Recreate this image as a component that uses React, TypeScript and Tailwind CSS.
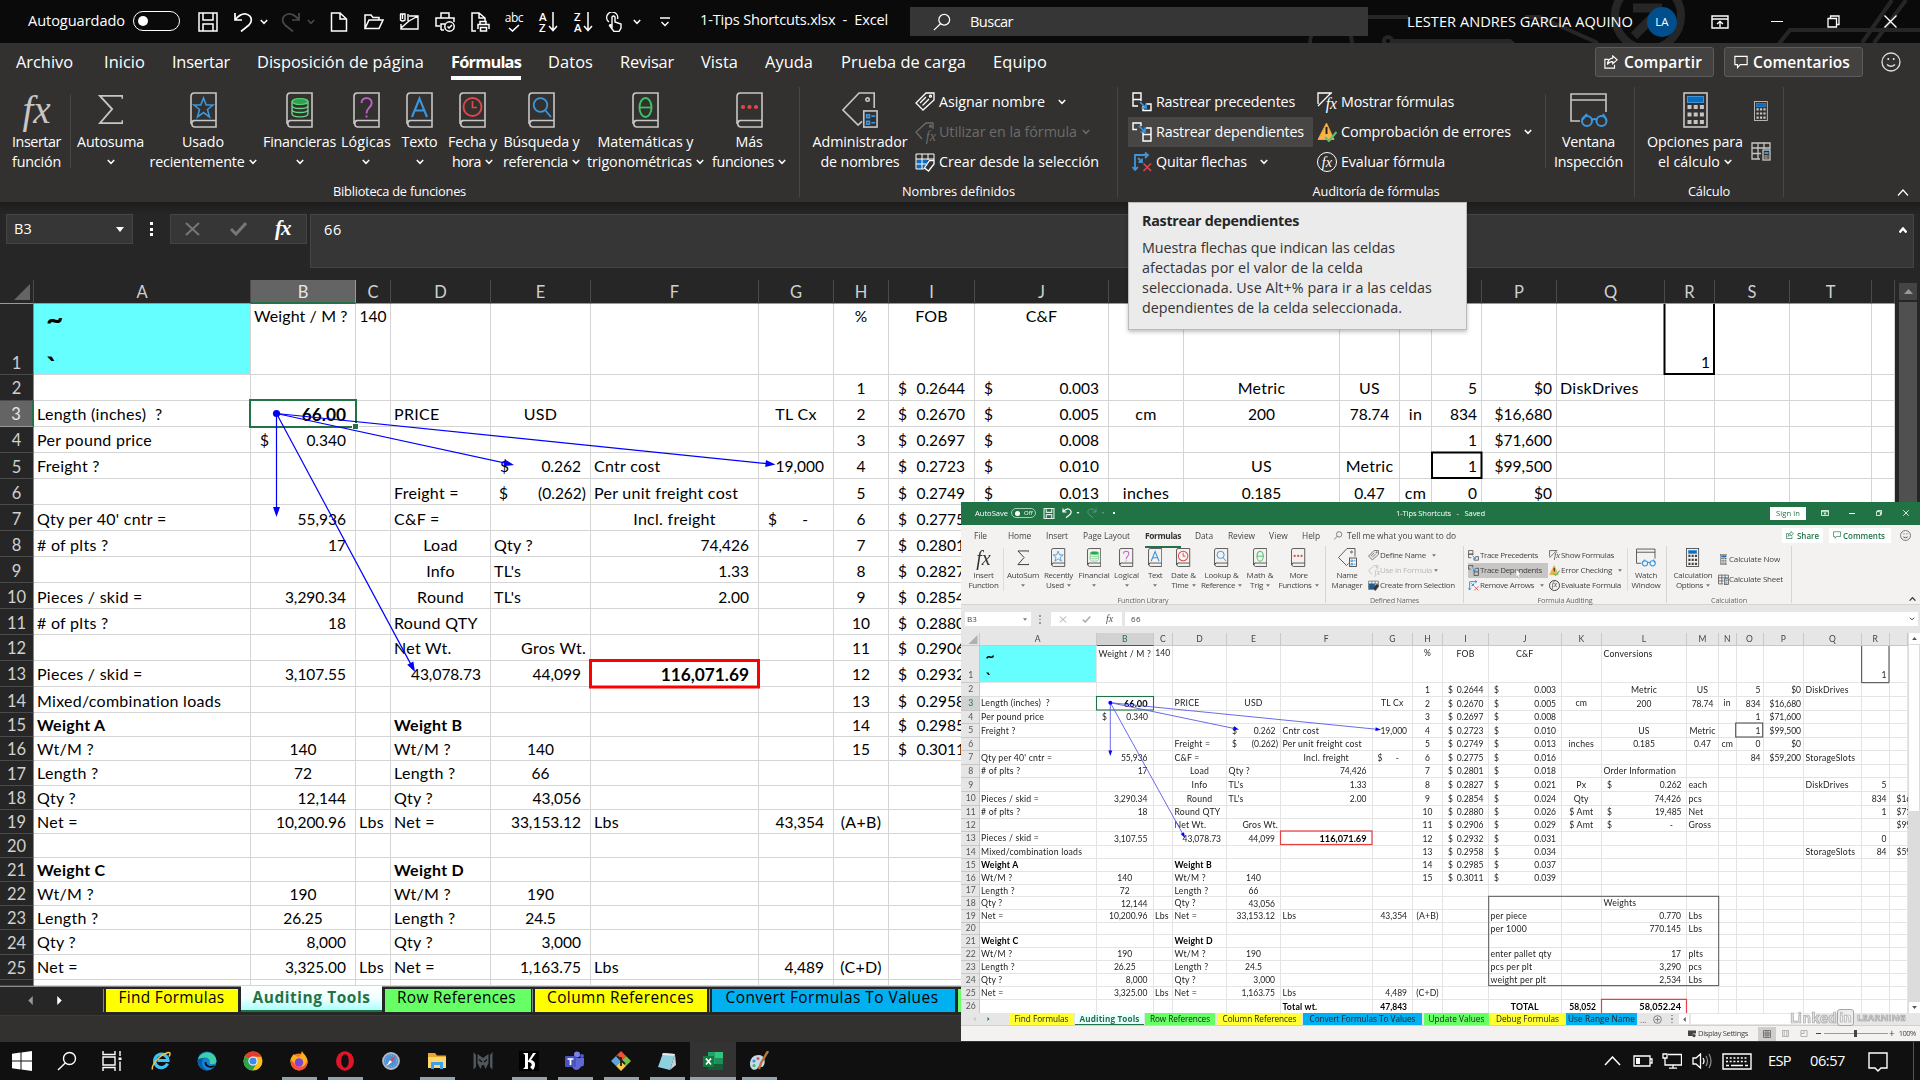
import React, { useLayoutEffect, useRef } from "react";

/* ---------- text that is tracked to fill the width of its box ---------- */
function Fit({ c, children }: { c: string; children: string }) {
  const outer = useRef<HTMLSpanElement>(null);
  const inner = useRef<HTMLSpanElement>(null);
  useLayoutEffect(() => {
    if (!outer.current || !inner.current) return;
    inner.current.style.letterSpacing = "0px";
    const natural = inner.current.getBoundingClientRect().width;
    const target = outer.current.getBoundingClientRect().width;
    inner.current.style.letterSpacing = (target - natural) / children.length + "px";
  }, [children]);
  return (
    <span ref={outer} className={"inline-block shrink-0 whitespace-pre " + c}>
      <span ref={inner}>{children}</span>
    </span>
  );
}

/* ---------- small shared drawings ---------- */
const Chev = ({ c = "w-[8px] h-[6px]" }: { c?: string }) => (
  <svg viewBox="0 0 8 6" className={"shrink-0 " + c} fill="none" stroke="currentColor" strokeWidth="1.5">
    <path d="M0.8 1L4 4.3L7.2 1" />
  </svg>
);
const Tri = () => (
  <svg viewBox="0 0 6 4" className="w-[4px] h-[3px] shrink-0" fill="#777"><path d="M0 0H6L3 4Z" /></svg>
);

const Book = ({ children }: { children: React.ReactNode }) => (
  <svg viewBox="0 0 27 36" className="h-full" fill="none">
    <path d="M26 28.5H4.5A3.5 3.5 0 0 0 1 32V4A3.2 3.2 0 0 1 4 1H26V35H4.5A3.3 3.3 0 0 1 4.5 28.5" stroke="currentColor" strokeWidth="1.6" />
    {children}
  </svg>
);
const Fx = ({ c }: { c: string }) => <span className={"font-['Liberation_Serif'] italic leading-none " + c}>fx</span>;
const Sigma = () => (
  <svg viewBox="0 0 27 34" className="h-full" fill="none" stroke="currentColor" strokeWidth="2"><path d="M26 5V2H2L15 16L2 31H26V28" /></svg>
);
const Star = () => <Book><path d="M13.5 6L16.2 13H23L17.5 17.5L19.5 25L13.5 20.5L7.5 25L9.5 17.5L4 13H10.8Z" stroke="#3a96dd" strokeWidth="1.6" /></Book>;
const Coins = () => (
  <Book>
    <ellipse cx="14" cy="9.5" rx="8" ry="3" fill="#2fa24c" stroke="#5fd17b" strokeWidth="1.2" />
    <path d="M6 9.5V13.5C6 17.5 22 17.5 22 13.5V9.5M6 14V17.5C6 21.5 22 21.5 22 17.5V14M6 18V21.5C6 26 22 26 22 21.5V18" stroke="#6bd385" strokeWidth="1.4" />
  </Book>
);
const Quest = () => <Book><path d="M8.5 11C8.5 4.5 18.7 4.5 18.7 11C18.7 15.5 13.5 15.5 13.5 21.5M13.5 23.5V25.5" stroke="#c65fd0" strokeWidth="1.9" /></Book>;
const LetterA = () => <Book><path d="M6 25L13.5 6.5L21 25M8.5 18.5H18.5" stroke="#3a96dd" strokeWidth="2.1" /></Book>;
const Clock = () => <Book><circle cx="13.5" cy="15" r="9" stroke="#e04848" strokeWidth="1.9" /><path d="M13.5 9V15.5H18" stroke="#e04848" strokeWidth="1.7" /></Book>;
const Lens = () => <Book><circle cx="12.5" cy="13" r="6.8" stroke="#3a96dd" strokeWidth="1.8" /><path d="M17 18L23 25" stroke="#3a96dd" strokeWidth="1.8" /></Book>;
const Theta = () => <Book><ellipse cx="13.5" cy="15.5" rx="6" ry="9.5" stroke="#3fc464" strokeWidth="1.9" /><path d="M7.5 15.5H19.5" stroke="#3fc464" strokeWidth="1.7" /></Book>;
const Dots = () => <Book><g fill="#e04848"><circle cx="7" cy="15" r="2.1" /><circle cx="13.5" cy="15" r="2.1" /><circle cx="20" cy="15" r="2.1" /></g></Book>;
const TagMgr = () => (
  <svg viewBox="0 0 38 38" className="h-full" fill="none" stroke="currentColor" strokeWidth="1.7">
    <path d="M34 17V1H18L1 19L17 35L21 31" /><circle cx="27" cy="8" r="1.8" />
    <rect x="23" y="20" width="14" height="17" />
    <path d="M26 24H29V27H26ZM26 31H29V34H26ZM31 25.5H35M31 32.5H35" stroke="#3a96dd" />
  </svg>
);
const Tag = ({ lines }: { lines?: boolean }) => (
  <svg viewBox="0 0 20 20" className="h-full" fill="none" stroke="currentColor" strokeWidth="1.3">
    {lines ? <path d="M19 1V8L8 18L1 11L11 1ZM5 11L11 5M7.5 13.5L14 7" /> : <path d="M18 7V1H11L1 10L7 17" />}
    <circle cx="15.5" cy="4.2" r="1" />
  </svg>
);
const TagFx = () => (
  <div className="relative h-full"><Tag /><Fx c="absolute right-[-1px] bottom-[-1px] text-[0.95em]" /></div>
);
const CreateSel = () => (
  <svg viewBox="0 0 20 20" className="h-full" fill="none">
    <rect x="1.5" y="7" width="11" height="10" fill="#0f6cbd" /><path d="M1 2H19V8M1 2V17H9" stroke="currentColor" />
    <path d="M1 7H19M1 12H11M7 2V17M13 2V8" stroke="currentColor" /><path d="M19 8.5V12L13.5 19L9.5 16L14.5 8.5Z" fill="#323130" stroke="currentColor" strokeWidth="1.3" />
  </svg>
);
const TraceP = () => (
  <svg viewBox="0 0 20 20" className="h-full" fill="none" stroke="currentColor" strokeWidth="1.4">
    <path d="M1 1H9V7.5H1ZM1 7.5H9M1 7.5V14H6M9 7.5V9M14 12H19V18.5H11V14" /><path d="M8 10L14 16M14 11.5V16H9.5" stroke="#3a96dd" strokeWidth="1.7" />
  </svg>
);
const TraceD = () => (
  <svg viewBox="0 0 20 20" className="h-full" fill="none" stroke="currentColor" strokeWidth="1.4">
    <path d="M5 7.5H1V1H9V4M14 6H19V12.5H11V19H19V12.5M11 12.5V10" /><path d="M7 4L13 10M13 5.5V10H8.5" stroke="#3a96dd" strokeWidth="1.7" />
  </svg>
);
const Remove = () => (
  <svg viewBox="0 0 20 20" className="h-full" fill="none" strokeWidth="1.8">
    <path d="M3 18V3H16M13 0.5L16 3L13 6M0.5 15L3 18L6 15M6 6L10 10M10 6.500V10H6.500" stroke="#3a96dd" /><path d="M11.5 11.5L19 19M19 11.5L11.5 19" stroke="#e04848" strokeWidth="1.5" />
  </svg>
);
const ShowFx = () => (
  <div className="relative h-full">
    <svg viewBox="0 0 20 20" className="h-full" fill="none" stroke="currentColor" strokeWidth="1.3"><path d="M15 1H1V12M1 14L14 1" /></svg>
    <Fx c="absolute right-0 bottom-0 text-[1.05em]" />
  </div>
);
const Warn = () => (
  <svg viewBox="0 0 20 20" className="h-full" fill="none"><path d="M9.5 1L17 17.5H1Z" fill="#f8b44c" stroke="#e8a33d" /><path d="M9.5 5V12" stroke="#222" strokeWidth="2" /><path d="M8 15L12 19L19.5 10" stroke="#57c46b" strokeWidth="2" /></svg>
);
const EvalFx = () => (
  <div className="relative flex h-full aspect-square items-center justify-center rounded-full border border-current"><Fx c="text-[0.95em]" /></div>
);
const Watch = () => (
  <svg viewBox="0 0 38 36" className="h-full" fill="none" stroke="currentColor" strokeWidth="1.6">
    <path d="M10 29H1V2H36V20M1 8H36" />
    <g stroke="#3a96dd" strokeWidth="2"><circle cx="17" cy="29" r="5" /><circle cx="31.5" cy="29" r="5" /><path d="M22 28Q24 26 27 28M12 28L17 22M36.5 28L33 22" /></g>
  </svg>
);
const Calc = () => (
  <svg viewBox="0 0 25 36" className="h-full" fill="none">
    <rect x="1" y="1" width="23" height="34" stroke="currentColor" strokeWidth="1.6" /><rect x="4.5" y="4.5" width="16" height="6" fill="#0f6cbd" stroke="#3a96dd" />
    <path d="M4.5 15H21M4.5 22.5H21M4.5 30H21" stroke="currentColor" strokeWidth="4" strokeDasharray="4 2.2" />
  </svg>
);
const CalcSheet = () => (
  <svg viewBox="0 0 20 20" className="h-full" fill="none" stroke="currentColor" strokeWidth="1.3"><path d="M9 18H1V2H19V8M1 7H19M1 12.5H10M7 2V18M13 2V8" /><rect x="12" y="9" width="7" height="10" /><path d="M13.5 12H17.5" stroke="#3a96dd" strokeWidth="2" /><path d="M13.5 15H17.5M13.5 17H17.5" strokeDasharray="1.2 .6" /></svg>
);
const Smile = ({ c }: { c: string }) => (
  <svg viewBox="0 0 20 20" className={c} fill="none" stroke="currentColor" strokeWidth="1.3"><circle cx="10" cy="10" r="9" /><path d="M6 12.5Q10 16 14 12.5M7.3 6V8M12.7 6V8" strokeWidth="1.6" /></svg>
);
const Share = ({ c }: { c: string }) => (
  <svg viewBox="0 0 16 16" className={c} fill="none" stroke="currentColor" strokeWidth="1.3"><path d="M5 5H1V15H12V11M10 1L15 5.5L10 10V7.5Q5.5 7.5 4 11Q4 4 10 3.5Z" /></svg>
);
const Bubble = ({ c }: { c: string }) => (
  <svg viewBox="0 0 16 16" className={c} fill="none" stroke="currentColor" strokeWidth="1.3"><path d="M1 1.5H15V11H7L4 14.5V11H1Z" /></svg>
);
const Search = ({ c }: { c: string }) => (
  <svg viewBox="0 0 20 20" className={c} fill="none" stroke="currentColor" strokeWidth="1.4"><circle cx="12.5" cy="7.5" r="6" /><path d="M8.3 12L1 19" /></svg>
);

/* ---------- ribbon parts ---------- */
type BigProps = { w: string; icon: React.ReactNode; a: string; aw: string; b?: string; bw?: string; chev?: boolean; s?: boolean };
function Big({ w, icon, a, aw, b, bw, chev, s }: BigProps) {
  return (
    <div className={"flex shrink-0 flex-col items-center " + w}>
      <div className={s ? "flex h-[20px] items-center mb-[2px]" : "flex h-[45px] items-center"}>
        <div className={s ? "flex h-[19px] items-center" : "flex h-[36px] items-center text-[#c8c6c4]"}>{icon}</div>
      </div>
      <div className={s ? "h-[10.5px] leading-[10.5px]" : "h-[20px] leading-[20px]"}><Fit c={aw}>{a}</Fit></div>
      <div className={s ? "flex h-[10.5px] items-center gap-[3px] leading-[10.5px]" : "flex h-[20px] items-center gap-[4px] leading-[20px]"}>
        {b && <Fit c={bw!}>{b}</Fit>}
        {chev && (s ? <Tri /> : <Chev />)}
      </div>
    </div>
  );
}
type SmallProps = { icon: React.ReactNode; t: string; w: string; chev?: string; s?: boolean; cls?: string };
function Small({ icon, t, w, chev, s, cls = "" }: SmallProps) {
  return (
    <div className={(s ? "flex h-[15px] items-center gap-[1px] " : "flex h-[30px] items-center gap-[4px] ") + cls}>
      <div className={s ? "h-[11px] w-[11px] text-[8px]" : "h-[20px] w-[20px] text-[15px]"}>{icon}</div>
      <Fit c={w}>{t}</Fit>
      {chev && <span className={chev}>{s ? <Tri /> : <Chev />}</span>}
    </div>
  );
}
const Group = ({ w, label, lw, s, children }: { w: string; label: string; lw: string; s?: boolean; children: React.ReactNode }) => (
  <div className={"flex shrink-0 flex-col " + w}>
    <div className={s ? "flex h-[51px] pt-[3.5px]" : "flex h-[98px] pt-[3px]"}>{children}</div>
    <div className={s ? "h-[10px] text-center text-[7.2px] leading-[12px] text-[#666]" : "h-[20px] text-center text-[12.8px] leading-[19px]"}><Fit c={lw}>{label}</Fit></div>
  </div>
);
const Sep = () => <div className="mt-[3px] h-[110px] w-px shrink-0 bg-[#484644]" />;
const SepS = () => <div className="mt-[2px] h-[57px] w-px shrink-0 bg-[#d8d6d4]" />;

/* ---------- sheet data ---------- */
const LETTERS = "ABCDEFGHIJKLMNOPQRSTU".split("");
const BASE: Record<string, string> = {
  B1: "l|Weight / M ?", C1: "c|140", H1: "c|%", I1: "c|FOB", J1: "c|C&F", L1: "l|Conversions", R1: "e|1",
  L2: "c|Metric", M2: "c|US", O2: "e|5", P2: "e|$0", Q2: "l|DiskDrives",
  A3: "l|Length (inches)  ?", B3: "B|66.00", D3: "l|PRICE", E3: "c|USD", G3: "c|TL Cx", K3: "c|cm", L3: "c|200", M3: "c|78.74", N3: "c|in", O3: "e|834", P3: "e|$16,680",
  A4: "l|Per pound price", B4: "s|0.340", O4: "e|1", P4: "e|$71,600",
  A5: "l|Freight ?", E5: "s|0.262", F5: "l|Cntr cost", G5: "r|19,000", L5: "c|US", M5: "c|Metric", O5: "e|1", P5: "e|$99,500",
  D6: "l|Freight =", E6: "S|(0.262)", F6: "l|Per unit freight cost", K6: "c|inches", L6: "c|0.185", M6: "c|0.47", N6: "c|cm", O6: "e|0", P6: "e|$0",
  A7: "l|Qty per 40' cntr =", B7: "r|55,936", D7: "l|C&F =", F7: "c|Incl. freight", G7: "s|-    ", O7: "e|84", P7: "e|$59,200", Q7: "l|StorageSlots",
  A8: "l|# of plts ?", B8: "r|17", D8: "c|Load", E8: "l|Qty ?", F8: "r|74,426", L8: "l|Order Information",
  D9: "c|Info", E9: "l|TL's", F9: "r|1.33", K9: "c|Px", L9: "s|0.262", M9: "l|each", Q9: "l|DiskDrives", R9: "e|5",
  A10: "l|Pieces / skid =", B10: "r|3,290.34", D10: "c|Round", E10: "l|TL's", F10: "r|2.00", K10: "c|Qty", L10: "r|74,426", M10: "l|pcs", R10: "e|834", S10: "f|$16",
  A11: "l|# of plts ?", B11: "r|18", D11: "l|Round QTY", K11: "c|$ Amt", L11: "s|19,485", M11: "l|Net", R11: "e|1", S11: "f|$71",
  D12: "l|Net Wt.", E12: "e|Gros Wt.", K12: "c|$ Amt", L12: "s|-    ", M12: "l|Gross", S12: "f|$99",
  A13: "l|Pieces / skid =", B13: "r|3,107.55", D13: "r|43,078.73", E13: "r|44,099", F13: "B|116,071.69", R13: "e|0",
  A14: "l|Mixed/combination loads", Q14: "l|StorageSlots", R14: "e|84", S14: "f|$59",
  A15: "h|Weight A", D15: "h|Weight B",
  A16: "l|Wt/M ?", B16: "c|140", D16: "l|Wt/M ?", E16: "c|140",
  A17: "l|Length ?", B17: "c|72", D17: "l|Length ?", E17: "c|66",
  A18: "l|Qty ?", B18: "r|12,144", D18: "l|Qty ?", E18: "r|43,056", L18: "l|Weights",
  A19: "l|Net =", B19: "r|10,200.96", C19: "l|Lbs", D19: "l|Net =", E19: "r|33,153.12", F19: "l|Lbs", G19: "r|43,354", H19: "c|(A+B)", J19: "l|per piece", L19: "r|0.770", M19: "l|Lbs",
  J20: "l|per 1000", L20: "r|770.145", M20: "l|Lbs",
  A21: "h|Weight C", D21: "h|Weight D",
  A22: "l|Wt/M ?", B22: "c|190", D22: "l|Wt/M ?", E22: "c|190", J22: "l|enter pallet qty", L22: "r|17", M22: "l|plts",
  A23: "l|Length ?", B23: "c|26.25", D23: "l|Length ?", E23: "c|24.5", J23: "l|pcs per plt", L23: "r|3,290", M23: "l|pcs",
  A24: "l|Qty ?", B24: "r|8,000", D24: "l|Qty ?", E24: "r|3,000", J24: "l|weight per plt", L24: "r|2,534", M24: "l|Lbs",
  A25: "l|Net =", B25: "r|3,325.00", C25: "l|Lbs", D25: "l|Net =", E25: "r|1,163.75", F25: "l|Lbs", G25: "r|4,489", H25: "c|(C+D)",
};
const FOB = ["0.2644", "0.2670", "0.2697", "0.2723", "0.2749", "0.2775", "0.2801", "0.2827", "0.2854", "0.2880", "0.2906", "0.2932", "0.2958", "0.2985", "0.3011"];
const CF = ["0.003", "0.005", "0.008", "0.010", "0.013", "0.016", "0.018", "0.021", "0.024", "0.026", "0.029", "0.031", "0.034", "0.037", "0.039"];
FOB.forEach((v, i) => {
  BASE["H" + (i + 2)] = "c|" + (i + 1);
  BASE["I" + (i + 2)] = "s|" + v;
  BASE["J" + (i + 2)] = "s|" + CF[i];
});
const INSET: Record<string, string> = { ...BASE, F26: "h|Total wt.", G26: "t|47,843", J26: "m|TOTAL", K26: "u|58,052", L26: "B|58,052.24" };
/* In the main window the inset covers everything right of column I below row 6. */
const MAIN: Record<string, string> = Object.fromEntries(
  Object.entries(BASE).filter(([k]) => !(k[0] > "I" && Number(k.slice(1)) > 6) && k !== "L1"),
);

const ALIGN: Record<string, string> = {
  l: "justify-start pl-[3px]", f: "justify-start pl-[3px]", h: "justify-start pl-[3px] font-bold", c: "justify-center", m: "justify-center font-bold",
  r: "justify-end pr-[9px]", t: "justify-end pr-[9px] font-bold", e: "justify-end pr-[4px]", u: "justify-end pr-[4px] font-bold",
  s: "justify-between pl-[9px] pr-[9px]", S: "justify-between pl-[8px] pr-[4px]", B: "justify-end pr-[9px] font-bold text-[17.3px]",
};
const ALIGN_S: Record<string, string> = {
  l: "justify-start pl-[1.5px]", f: "justify-start pl-[7px]", h: "justify-start pl-[1.5px] font-bold text-black", c: "justify-center", m: "justify-center font-bold text-black",
  r: "justify-end pr-[5px]", t: "justify-end pr-[5px] font-bold text-black", e: "justify-end pr-[2px]", u: "justify-end pr-[5px] font-bold text-black",
  s: "justify-between pl-[5px] pr-[4.500px]", S: "justify-between pl-[5px] pr-[2px]", B: "justify-end pr-[5px] font-bold text-black text-[9.2px]",
};
const SHIFT: Record<number, string> = { 1: "", 2: "pt-[2px]", 3: "pt-[2px]", 4: "pt-[2px]", 5: "pt-[3px]", 6: "pt-[4px]", 7: "pt-[4px]", 8: "pt-[4px]", 9: "pt-[4px]", 10: "pt-[4px]", 11: "pt-[4px]", 12: "pt-[2px]", 13: "pt-[2px]", 14: "pt-[4px]" };
const shift = (r: number) => SHIFT[r] ?? "pt-[2px]";

function Cell({ id, row, spec, s }: { id: string; row: number; spec?: string; s?: boolean }) {
  const line = s ? "border-[#e4e4e4] " : "border-[#d4d4d4] ";
  if (id === "A1")
    return (
      <div className={"flex flex-col border-r border-b bg-[#66ffff] font-bold text-black " + line + (s ? "gap-[10px] px-[6px] pt-[2px] text-[16px] leading-[13px]" : "gap-[21px] px-[12px] text-[30px] leading-[28px]")}>
        <span>~</span><span>`</span>
      </div>
    );
  const vert = row === 1 ? (id === "R1" ? "items-end " : "items-start ") : "items-center ";
  const kind = spec ? spec[0] : "l";
  const text = spec ? spec.slice(2) : "";
  const lead = row === 1 ? (s ? "leading-[13px] " : "leading-[24px] ") : "leading-none ";
  const word = /[a-z]/i.test(text)
    ? s ? "text-[8.7px] tracking-[0.2px]" : row === 1 ? "text-[16px] tracking-[0.1px]" : "-mt-[1.5px] text-[16px] tracking-[0.28px]"
    : undefined;
  return (
    <div className={"flex min-w-0 whitespace-pre border-r border-b " + line + vert + lead + (s ? ALIGN_S : ALIGN)[kind] + " " + (s ? "pt-[1.500px]" : shift(row))}>
      {(kind === "s" || kind === "S") && <span>$</span>}
      {text && <span className={word}>{text}</span>}
    </div>
  );
}

function Rows({ cols, data, s }: { cols: string[]; data: Record<string, string>; s?: boolean }) {
  return (
    <>
      {Array.from({ length: 26 }, (_, i) => i + 1).map((r) => (
        <React.Fragment key={r}>
          <div
            className={
              s
                ? "flex justify-center border-b border-r border-[#c8c8c8] pl-0.5 pt-px text-[8.6px] leading-none text-[#555] " + (r === 1 ? "items-end pb-[2px]" : "items-center") + (r === 3 ? " bg-[#d2d2d2] text-[#217346]" : " bg-[#e6e6e6]")
                : "flex justify-center border-b overflow-hidden text-[16.5px] leading-none " + (r === 1 ? "items-end pb-[3px] " : "items-center ") + shift(r) + (r === 3 ? " border-r-2 border-r-[#217346] border-b-[#999] bg-[#646464] text-[#e8e8e8]" : " border-r border-r-[#8a8a8a] border-b-[#4b4b4b] bg-[#262626] text-[#d0d0d0]")
            }
          >
            {s || r < 26 ? r : ""}
          </div>
          {cols.map((l) => <Cell key={l} id={l + r} row={r} spec={data[l + r]} s={s} />)}
        </React.Fragment>
      ))}
    </>
  );
}

function Arrows({ o, tips, k, thin }: { o: [number, number]; tips: [number, number][]; k: number; thin?: boolean }) {
  return (
    <g stroke={thin ? "#5a5ae6" : "#0000ff"} strokeWidth={thin ? 0.9 : 1.2} fill="#0000ff">
      {tips.map(([x, y]) => {
        const a = Math.atan2(y - o[1], x - o[0]);
        const p = (d: number, q: number) => `${x - d * Math.cos(a) - q * Math.sin(a)},${y - d * Math.sin(a) + q * Math.cos(a)}`;
        return (
          <g key={x + "-" + y}>
            <line x1={o[0]} y1={o[1]} x2={x - 3 * Math.cos(a)} y2={y - 3 * Math.sin(a)} />
            <polygon stroke="none" points={`${x},${y} ${p(k, k * 0.35)} ${p(k, -k * 0.35)}`} />
          </g>
        );
      })}
      <circle cx={o[0]} cy={o[1]} r={k * 0.36} stroke="none" />
    </g>
  );
}

/* ---------- main window ---------- */
const I20 = "w-[20px] h-[20px] shrink-0";
function TitleBar() {
  return (
    <div className="relative flex h-[43px] shrink-0 items-center overflow-hidden bg-[#0a0a0a] text-[14.6px] text-white">
      <svg viewBox="1300 0 620 43" className="absolute right-0 top-0 h-[43px] w-[620px]" fill="none" stroke="#262626" strokeWidth="4">
        <path d="M1368 17H1408M1310 43A16 16 0 0 1 1352 43M1392 41H1510L1518 48M1525 17L1540 17L1598 43" />
        <circle cx="1388" cy="41" r="4" /><circle cx="1648" cy="16" r="33" strokeWidth="8" /><path d="M1633 8H1662M1660 10L1634 36" strokeWidth="9" />
        <path d="M1778 45L1790 30H1920M1862 43L1892 0M1874 43L1906 0" strokeWidth="4" />
      </svg>
      <Fit c="relative -mt-px ml-[28px] w-[97px]">Autoguardado</Fit>
      <div className="relative -mt-[2px] ml-[8px] flex h-[20px] w-[47px] items-center rounded-full border-[1.5px] border-white pl-[4px]"><div className="h-[10px] w-[10px] rounded-full bg-white" /></div>
      <svg viewBox="0 0 20 20" className={"ml-[18px] " + I20} fill="none" stroke="#fff" strokeWidth="1.5"><path d="M1 1H19V19H1ZM5 1V8H15V1M5 19V12H15V19" /></svg>
      <svg viewBox="0 0 20 20" className={"ml-[15px] " + I20} fill="none" stroke="#fff" strokeWidth="1.7"><path d="M2 1V8H9M2 8C6 3 9 1.5 13 2C20 4 19 10 16 13L8 19.5" /></svg>
      <Chev c="ml-[7px] w-[8px] h-[6px]" />
      <svg viewBox="0 0 20 20" className={"ml-[13px] text-[#4a4a4a] " + I20} fill="none" stroke="currentColor" strokeWidth="1.7"><path d="M18 1V8H11M18 8C14 3 11 1.5 7 2C0 4 1 10 4 13L12 19.5" /></svg>
      <Chev c="ml-[6px] w-[8px] h-[6px] text-[#4a4a4a]" />
      <svg viewBox="0 0 20 20" className={"ml-[14px] " + I20} fill="none" stroke="#fff" strokeWidth="1.5"><path d="M2.5 1H11L17.5 7V19H2.5ZM11 1V7H17.5" /></svg>
      <svg viewBox="0 0 20 20" className={"ml-[15px] " + I20} fill="none" stroke="#fff" strokeWidth="1.5"><path d="M1 16.5V3H7L9 5.5H15V8M1 16.5L5 8H19L15 16.5Z" /></svg>
      <svg viewBox="0 0 20 20" className={"ml-[15px] " + I20} fill="none" stroke="#fff" strokeWidth="1.4"><path d="M10 4H19V17H2V12M2 16L10 9L19 4M1 2H6V8Q3.5 10 1.5 8V2M3.5 2V7M9 9V2" /></svg>
      <svg viewBox="0 0 20 20" className={"ml-[16px] " + I20} fill="none" stroke="#fff" strokeWidth="1.5"><path d="M6 6V1H14V6M5 14H1V6H19V10M6 18V12H10M6 18H9" /><circle cx="14.5" cy="14.5" r="4.7" /><path d="M12.5 14.5L14 16L17 13" /></svg>
      <svg viewBox="0 0 20 20" className={"ml-[15px] " + I20} fill="none" stroke="#fff" strokeWidth="1.5"><path d="M6 19H2V1H9L15 6V9M9 1V6H15M10 12V9.5H16V12M8 17V12.5H19V17M10.5 15.5H16.5V19H10.5Z" /></svg>
      <div className="ml-[14px] flex w-[20px] flex-col items-center text-[12px] leading-[12px]"><span className="tracking-[-0.5px]">abc</span><svg viewBox="0 0 12 8" className="h-[8px] w-[12px]" fill="none" stroke="#fff" strokeWidth="1.6"><path d="M1 4L4.5 7L11 1" /></svg></div>
      <div className="ml-[15px] flex items-center"><span className="w-[9px] text-[11.5px] font-semibold leading-[11px]">A<br />Z</span><svg viewBox="0 0 10 20" className="h-[20px] w-[10px]" fill="none" stroke="#fff" strokeWidth="1.5"><path d="M5 0V18M1 14L5 18.5L9 14" /></svg></div>
      <div className="ml-[16px] flex items-center"><span className="w-[9px] text-[11.5px] font-semibold leading-[11px]">Z<br />A</span><svg viewBox="0 0 10 20" className="h-[20px] w-[10px]" fill="none" stroke="#fff" strokeWidth="1.5"><path d="M5 0V18M1 14L5 18.5L9 14" /></svg></div>
      <svg viewBox="0 0 20 20" className={"ml-[12px] " + I20} fill="none" stroke="#fff" strokeWidth="1.4"><path d="M4 10A5.5 5.5 0 1 1 12.5 7M7 16V5Q8.5 3 10 5V10L16 12V16L14 19.5H9L4.5 13.5Q5 12 7 13.5" /></svg>
      <Chev c="ml-[8px] w-[8px] h-[6px]" />
      <svg viewBox="0 0 10 10" className="ml-[19px] h-[10px] w-[10px]" fill="none" stroke="#fff" strokeWidth="1.4"><path d="M0 1H10M1.5 5L5 8.5L8.5 5" /></svg>
      <Fit c="-mt-[3px] ml-[30px] w-[188px]">1-Tips Shortcuts.xlsx  -  Excel</Fit>
      <div className="relative ml-[22px] flex h-[29px] w-[458px] items-center bg-[#363636]">
        <Search c="ml-[23px] h-[18px] w-[18px]" />
        <Fit c="ml-[19px] w-[43px]">Buscar</Fit>
      </div>
      <Fit c="relative ml-[39px] w-[226px]">LESTER ANDRES GARCIA AQUINO</Fit>
      <div className="relative ml-[14px] flex h-[30px] w-[30px] items-center justify-center rounded-full bg-[#004e8c] text-[11.5px]">LA</div>
      <svg viewBox="0 0 18 14" className="relative ml-[34px] h-[14px] w-[18px]" fill="none" stroke="#fff" strokeWidth="1.4"><path d="M1 1H17V13H1ZM1 4H17M9 12V6.5M6 9L9 6.500L12 9" /></svg>
      <div className="relative ml-[42px] h-[1.5px] w-[12px] bg-white" />
      <svg viewBox="0 0 13 13" className="relative ml-[44px] h-[13px] w-[13px]" fill="none" stroke="#fff" strokeWidth="1.3"><path d="M1 3.5H9.5V12H1ZM3.5 3.5V1H12V9.5H9.5" /></svg>
      <svg viewBox="0 0 13 13" className="relative ml-[44px] h-[13px] w-[13px]" fill="none" stroke="#fff" strokeWidth="1.4"><path d="M0.5 0.5L12.5 12.5M12.5 0.5L0.5 12.5" /></svg>
    </div>
  );
}

const TABS: [string, string][] = [
  ["Archivo", "ml-[16px] w-[57px]"], ["Inicio", "ml-[31px] w-[41px]"], ["Insertar", "ml-[27px] w-[58px]"], ["Disposición de página", "ml-[27px] w-[167px]"],
  ["Fórmulas", "ml-[27px] w-[70px] font-bold"], ["Datos", "ml-[27px] w-[45px]"], ["Revisar", "ml-[27px] w-[54px]"], ["Vista", "ml-[27px] w-[37px]"],
  ["Ayuda", "ml-[27px] w-[48px]"], ["Prueba de carga", "ml-[28px] w-[125px]"], ["Equipo", "ml-[27px] w-[54px]"],
];

function Ribbon() {
  return (
    <div className="h-[159px] shrink-0 bg-[#323130] text-white">
      <div className="flex h-[41px] text-[16.4px] leading-[38px]">
        {TABS.map(([t, c]) => (
          <div key={t} className="flex shrink-0 flex-col">
            <Fit c={c + " h-[33px]"}>{t}</Fit>
            {t === "Fórmulas" && <div className="ml-[27px] h-[4px] w-[70px] bg-white" />}
          </div>
        ))}
        <div className="ml-[548px] mt-[4px] flex h-[30px] w-[119px] shrink-0 items-center gap-[6px] rounded-[3px] border border-[#5e5c5a] bg-[#444240] pl-[8px] text-[15.5px] font-semibold leading-[28px]">
          <Share c="h-[14px] w-[14px]" /><Fit c="w-[78px]">Compartir</Fit>
        </div>
        <div className="ml-[10px] mt-[4px] flex h-[30px] w-[139px] shrink-0 items-center gap-[5px] rounded-[3px] border border-[#5e5c5a] bg-[#444240] pl-[9px] text-[15.5px] font-semibold leading-[28px]">
          <Bubble c="h-[14px] w-[14px]" /><Fit c="w-[97px]">Comentarios</Fit>
        </div>
        <Smile c="ml-[18px] mt-[9px] h-[20px] w-[20px] text-[#e0e0e0]" />
      </div>
      <div className="relative flex text-[14.3px]">
        <Group w="w-[799px]" label="Biblioteca de funciones" lw="w-[133px]">
          <Big w="w-[70px] pl-[3px]" icon={<Fx c="text-[39px]" />} a="Insertar" aw="w-[49px]" b="función" bw="w-[49px]" />
          <div className="mt-[7px] h-[74px] w-px bg-[#484644]" />
          <Big w="w-[79px]" icon={<div className="h-[32px]"><Sigma /></div>} a="Autosuma" aw="w-[67px]" chev />
          <Big w="w-[106px]" icon={<Star />} a="Usado" aw="w-[42px]" b="recientemente" bw="w-[95px]" chev />
          <Big w="w-[87px]" icon={<Coins />} a="Financieras" aw="w-[73px]" chev />
          <Big w="w-[46px]" icon={<Quest />} a="Lógicas" aw="w-[50px]" chev />
          <Big w="w-[61px]" icon={<LetterA />} a="Texto" aw="w-[36px]" chev />
          <Big w="w-[45px]" icon={<Clock />} a="Fecha y" aw="w-[49px]" b="hora" bw="w-[29px]" chev />
          <Big w="w-[93px]" icon={<Lens />} a="Búsqueda y" aw="w-[76px]" b="referencia" bw="w-[65px]" chev />
          <Big w="w-[115px]" icon={<Theta />} a="Matemáticas y" aw="w-[96px]" b="trigonométricas" bw="w-[105px]" chev />
          <Big w="w-[92px]" icon={<Dots />} a="Más" aw="w-[27px]" b="funciones" bw="w-[62px]" chev />
        </Group>
        <Sep />
        <Group w="w-[317px]" label="Nombres definidos" lw="w-[113px]">
          <Big w="w-[115px] pl-[5px]" icon={<TagMgr />} a="Administrador" aw="w-[95px]" b="de nombres" bw="w-[79px]" />
          <div>
            <Small icon={<Tag lines />} t="Asignar nombre" w="w-[106px]" chev="ml-[9px]" />
            <Small icon={<TagFx />} t="Utilizar en la fórmula" w="w-[138px]" chev="ml-[1px]" cls="text-[#6e6c6a]" />
            <Small icon={<CreateSel />} t="Crear desde la selección" w="w-[160px]" />
          </div>
        </Group>
        <Sep />
        <Group w="w-[516px]" label="Auditoría de fórmulas" lw="w-[127px]">
          <div className="ml-[10px] w-[185px]">
            <Small icon={<TraceP />} t="Rastrear precedentes" w="w-[139px]" cls="pl-[4px]" />
            <Small icon={<TraceD />} t="Rastrear dependientes" w="w-[148px]" cls="bg-[#484644] pl-[4px]" />
            <Small icon={<Remove />} t="Quitar flechas" w="w-[91px]" chev="ml-[9px]" cls="pl-[4px]" />
          </div>
          <div className="ml-[4px] w-[228px]">
            <Small icon={<ShowFx />} t="Mostrar fórmulas" w="w-[113px]" />
            <Small icon={<Warn />} t="Comprobación de errores" w="w-[170px]" chev="ml-[9px]" />
            <Small icon={<EvalFx />} t="Evaluar fórmula" w="w-[104px]" />
          </div>
          <div className="mt-[7px] h-[74px] w-px bg-[#484644]" />
          <Big w="w-[85px]" icon={<Watch />} a="Ventana" aw="w-[53px]" b="Inspección" bw="w-[69px]" />
        </Group>
        <Sep />
        <Group w="w-[148px]" label="Cálculo" lw="w-[42px]">
          <Big w="w-[116px] pl-[4px]" icon={<Calc />} a="Opciones para" aw="w-[96px]" b="el cálculo" bw="w-[62px]" chev />
          <div className="flex flex-col items-center text-[#c8c6c4]">
            <div className="mt-[14px] h-[20px]"><Calc /></div>
            <div className="mt-[20px] h-[20px]"><CalcSheet /></div>
          </div>
        </Group>
        <Sep />
        <svg viewBox="0 0 12 7" className="ml-[113px] mt-[105px] h-[7px] w-[12px]" fill="none" stroke="#fff" strokeWidth="1.2"><path d="M1 6.5L6 1L11 6.5" /></svg>
      </div>
    </div>
  );
}

function FormulaBar() {
  return (
    <div className="flex h-[78px] shrink-0 items-start bg-[#262626] bg-linear-to-b from-[#1c1c1c] to-[#262626] to-15% pt-[12px] text-[14.5px] text-white">
      <div className="ml-[6px] flex h-[30px] w-[127px] items-center justify-between border border-[#444] bg-[#363636] pl-[7px] pr-[8px]">
        <Fit c="w-[18px]">B3</Fit><svg viewBox="0 0 8 5" className="h-[5px] w-[8px]" fill="#fff"><path d="M0 0H8L4 5Z" /></svg>
      </div>
      <div className="ml-[17px] mt-[8px] flex flex-col gap-[2.5px]"><i className="h-[3px] w-[3px] bg-white" /><i className="h-[3px] w-[3px] bg-white" /><i className="h-[3px] w-[3px] bg-white" /></div>
      <div className="ml-[17px] flex h-[30px] w-[137px] items-center border border-[#444] bg-[#363636]">
        <svg viewBox="0 0 15 14" className="ml-[14px] h-[14px] w-[15px]" fill="none" stroke="#777" strokeWidth="2"><path d="M1 1L14 13M14 1L1 13" /></svg>
        <svg viewBox="0 0 17 14" className="ml-[30px] h-[14px] w-[17px]" fill="none" stroke="#777" strokeWidth="3"><path d="M1 7L6 12L16 1" /></svg>
        <Fx c="ml-[28px] mb-[2px] text-[21px] font-bold tracking-[-1px]" />
      </div>
      <div className="ml-[3px] flex h-[54px] w-[1604px] justify-between border border-[#444] bg-[#363636] pl-[13px] pr-[6px] pt-[4px]">
        <Fit c="w-[18px]">66</Fit>
        <svg viewBox="0 0 8 6" className="mt-[8px] h-[6px] w-[8px]" fill="none" stroke="#fff" strokeWidth="2.4"><path d="M0.5 5.5L4 1.5L7.5 5.5" /></svg>
      </div>
    </div>
  );
}

function MainSheet() {
  return (
    <div className="flex h-[706px] shrink-0 bg-[#262626]">
      <div className="relative h-[706px] w-[1895px] overflow-hidden">
        <div className="grid h-[706px] grid-cols-[34px_217px_105px_35px_100px_100px_168px_75px_55px_86px_134px_75px_156px_60px_32px_50px_75px_108px_50px_75px_82px_23px] grid-rows-[24px_71px_repeat(13,26px)_24px_24px_25px_24px_24px_24px_24px_24px_24px_25px_25px_6px] bg-white font-['Lato'] text-[15.5px] text-black">
          <div className="flex items-end justify-end border-b border-r border-b-[#999] border-r-[#4b4b4b] bg-[#262626] pb-[3px] pr-[3px]"><svg viewBox="0 0 16 16" className="h-[16px] w-[16px]" fill="#646464"><path d="M16 0V16H0Z" /></svg></div>
          {LETTERS.map((l) => (
            <div key={l} className={"flex items-center justify-center border-r pt-[2px] text-[16.5px] leading-none " + (l === "B" ? "border-b-2 border-b-[#217346] border-r-[#999] bg-[#646464] text-[#e8e8e8]" : "border-b border-b-[#999] border-r-[#4b4b4b] bg-[#262626] text-[#d0d0d0]")}>{l === "U" || (l > "J" && l < "P") ? "" : l}</div>
          ))}
          <Rows cols={LETTERS} data={MAIN} />
        </div>
        <svg viewBox="0 280 1895 706" className="absolute left-0 top-0 h-[706px] w-[1895px]" fill="none">
          <rect x="250" y="400" width="106" height="27" stroke="#217346" strokeWidth="2" /><rect x="352.500" y="423.500" width="6" height="6" fill="#217346" stroke="#fff" />
          <rect x="590.500" y="660.500" width="168" height="26.500" stroke="#f00" strokeWidth="3" />
          <path d="M1664.500 304V374H1714V304" stroke="#000" strokeWidth="2" /><rect x="1432" y="452.500" width="49.500" height="25.500" stroke="#000" strokeWidth="2" />
          <Arrows o={[276.5, 413.5]} tips={[[276.5, 517], [514, 465], [775.5, 464.5], [415, 672]]} k={10} />
        </svg>
      </div>
      <div className="ml-[4px] flex w-[18px] flex-col">
        <div className="mt-[3px] flex h-[17px] items-center justify-center bg-[#444]"><svg viewBox="0 0 9 5" className="h-[5px] w-[9px]" fill="#999"><path d="M0 5L4.500 0L9 5Z" /></svg></div>
        <div className="mt-[2px] grow bg-[#505050]" />
      </div>
    </div>
  );
}

function SheetTabs() {
  return (
    <div className="flex h-[29px] shrink-0 items-start border-t border-[#8a8a8a] bg-[#262626] text-[15.4px] leading-[17px] text-black">
      <svg viewBox="0 0 5 10" className="ml-[28px] mt-[9px] h-[9px] w-[5px]" fill="#999"><path d="M5 0V10L0 5Z" /></svg>
      <svg viewBox="0 0 5 10" className="ml-[24px] mt-[9px] h-[9px] w-[5px]" fill="#fff"><path d="M0 0V10L5 5Z" /></svg>
      <div className="ml-[41px] mt-[2px] h-[23px] w-px bg-[#888]" />
      <div className="ml-[2px] mt-[2px] h-[23px] w-[132px] bg-[#ffff00] text-center"><Fit c="-ml-[1px] w-[106px]">Find Formulas</Fit></div>
      <div className="ml-[3px] -mt-px h-[26px] w-[141px] border-b-[2px] border-[#217346] bg-linear-to-b from-white via-[#f0ffff] to-[#a8ffff] pt-[3px] text-center font-bold text-[#217346]"><Fit c="w-[118px]">Auditing Tools</Fit></div>
      <div className="ml-[3px] mt-[2px] h-[23px] w-[146px] bg-[#66ff66] text-center"><Fit c="-ml-[3px] w-[119px]">Row References</Fit></div>
      <div className="ml-[1px] mt-[2px] h-[23px] w-px bg-[#888]" />
      <div className="ml-[2px] mt-[2px] h-[23px] w-[172px] bg-[#ffff00] text-center"><Fit c="-ml-px w-[147px]">Column References</Fit></div>
      <div className="ml-[2px] mt-[2px] h-[23px] w-px bg-[#888]" />
      <div className="ml-[2px] mt-[2px] h-[23px] w-[243px] bg-[#00b0f0] text-center"><Fit c="-ml-[3px] w-[213px]">Convert Formulas To Values</Fit></div>
      <div className="ml-[3px] mt-[2px] h-[23px] w-[40px] bg-[#66ff66]" />
    </div>
  );
}

/* ---------- inset window ---------- */
const TABS_S: [string, string][] = [
  ["File", "ml-[13px] w-[13px]"], ["Home", "ml-[21px] w-[23px]"], ["Insert", "ml-[15px] w-[22px]"], ["Page Layout", "ml-[15px] w-[47px]"], ["Formulas", "ml-[15px] w-[36px] font-bold text-[#333]"],
  ["Data", "ml-[14px] w-[18px]"], ["Review", "ml-[15px] w-[27px]"], ["View", "ml-[14px] w-[19px]"], ["Help", "ml-[14px] w-[18px]"],
];
const COLS_S = LETTERS.slice(0, 19);
const Kebab = ({ c }: { c: string }) => (
  <div className={"flex w-[2px] flex-col gap-[2px] " + c}><i className="h-[1.5px] w-[1.5px] bg-[#999]" /><i className="h-[1.5px] w-[1.5px] bg-[#999]" /><i className="h-[1.5px] w-[1.5px] bg-[#999]" /></div>
);

function Inset() {
  return (
    <div className="absolute left-[961px] top-[502px] flex h-[539px] w-[959px] flex-col overflow-hidden bg-[#f3f2f1] text-[8px] text-[#444] blur-[0.25px]">
      <div className="flex h-[22.5px] shrink-0 items-center bg-[#217346] text-[7.600px] text-white">
        <Fit c="ml-[14px] w-[33px]">AutoSave</Fit>
        <div className="ml-[3px] flex h-[10px] w-[25px] items-center gap-[4px] rounded-full border border-[#a9cdb8] pl-[3px] text-[6px]"><i className="h-[5px] w-[5px] rounded-full bg-white" />Off</div>
        <svg viewBox="0 0 20 20" className="ml-[7px] h-[11px] w-[12px]" fill="none" stroke="#dfeee5" strokeWidth="2"><path d="M1 1H19V19H1ZM5 1V8H15V1M5 19V12H15V19" /></svg>
        <svg viewBox="0 0 20 20" className="ml-[7px] h-[10px] w-[10px]" fill="none" stroke="#fff" strokeWidth="2.400"><path d="M2 1V8H9M2 8C6 3 9 1.500 13 2C20 4 19 10 16 13L8 19.500" /></svg>
        <svg viewBox="0 0 6 4" className="ml-[4px] h-[2px] w-[4px]" fill="#fff"><path d="M0 0H6L3 4Z" /></svg>
        <svg viewBox="0 0 20 20" className="ml-[7px] h-[10px] w-[10px]" fill="none" stroke="#5b9a77" strokeWidth="2"><path d="M18 1V8H11M18 8C14 3 11 1.500 7 2C0 4 1 10 4 13L12 19.500" /></svg>
        <svg viewBox="0 0 6 4" className="ml-[4px] h-[2px] w-[4px]" fill="#5b9a77"><path d="M0 0H6L3 4Z" /></svg>
        <i className="ml-[8px] h-[2px] w-[2px] bg-white" />
        <Fit c="ml-[281px] w-[89px]">1-Tips Shortcuts   -   Saved</Fit>
        <div className="ml-[285px] flex h-[13px] w-[36px] items-center justify-center bg-white text-[#217346]"><Fit c="w-[24px]">Sign in</Fit></div>
        <svg viewBox="0 0 18 14" className="ml-[15px] h-[6px] w-[8px]" fill="none" stroke="#fff" strokeWidth="2"><path d="M1 1H17V13H1ZM1 4H17M9 12V6.500M6 9L9 6.500L12 9" /></svg>
        <i className="ml-[20px] h-px w-[6px] bg-white" />
        <svg viewBox="0 0 13 13" className="ml-[21px] h-[6px] w-[6px]" fill="none" stroke="#fff" strokeWidth="1.800"><path d="M1 3.500H9.500V12H1ZM3.500 3.500V1H12V9.500H9.500" /></svg>
        <svg viewBox="0 0 13 13" className="ml-[21px] h-[6px] w-[6px]" fill="none" stroke="#fff" strokeWidth="1.800"><path d="M0.500 0.500L12.500 12.500M12.500 0.500L0.500 12.500" /></svg>
      </div>
      <div className="flex h-[19.500px] shrink-0 text-[8.400px] leading-[21px]">
        {TABS_S.map(([t, c]) => (
          <div key={t} className="shrink-0">
            <Fit c={c + " block h-[16.500px]"}>{t}</Fit>
            {t === "Formulas" && <div className="ml-[15px] h-[2px] w-[36px] bg-[#217346]" />}
          </div>
        ))}
        <Search c="ml-[13px] mt-[6px] h-[9px] w-[10px]" />
        <Fit c="ml-[4px] w-[109px]">Tell me what you want to do</Fit>
        <div className="ml-[326px] mt-[3px] flex h-[15px] w-[41px] items-center gap-[3px] bg-white pl-[4px] text-[8px] font-semibold text-[#217346]"><Share c="h-[8px] w-[8px]" /><Fit c="w-[22px]">Share</Fit></div>
        <div className="ml-[6px] mt-[3px] flex h-[15px] w-[62px] items-center gap-[2px] bg-white pl-[4px] text-[8px] font-semibold text-[#217346]"><Bubble c="h-[8px] w-[8px]" /><Fit c="w-[42px]">Comments</Fit></div>
        <Smile c="ml-[9px] mt-[5px] h-[11px] w-[11px] text-[#444]" />
      </div>
      <div className="flex h-[61px] shrink-0 border-b border-[#d6d4d2]">
        <Group s w="w-[364px]" label="Function Library" lw="w-[51px]">
          <Big s w="w-[42px] pl-[3px]" icon={<Fx c="text-[20px] text-[#333]" />} a="Insert" aw="w-[20px]" b="Function" bw="w-[30px]" />
          <div className="h-[43px] w-px bg-[#dddbd9]" />
          <Big s w="w-[38px]" icon={<div className="h-[16px] text-[#333]"><Sigma /></div>} a="AutoSum" aw="w-[32px]" chev />
          <Big s w="w-[33px]" icon={<Star />} a="Recently" aw="w-[29px]" b="Used" bw="w-[18px]" chev />
          <Big s w="w-[38px]" icon={<Coins />} a="Financial" aw="w-[31px]" chev />
          <Big s w="w-[27px]" icon={<Quest />} a="Logical" aw="w-[25px]" chev />
          <Big s w="w-[30px]" icon={<LetterA />} a="Text" aw="w-[14px]" chev />
          <Big s w="w-[27px]" icon={<Clock />} a="Date &" aw="w-[25px]" b="Time" bw="w-[17px]" chev />
          <Big s w="w-[49px]" icon={<Lens />} a="Lookup &" aw="w-[34px]" b="Reference" bw="w-[34px]" chev />
          <Big s w="w-[28px]" icon={<Theta />} a="Math &" aw="w-[27px]" b="Trig" bw="w-[13px]" chev />
          <Big s w="w-[49px]" icon={<Dots />} a="More" aw="w-[18px]" b="Functions" bw="w-[33px]" chev />
        </Group>
        <SepS />
        <Group s w="w-[137px]" label="Defined Names" lw="w-[49px]">
          <Big s w="w-[42px]" icon={<TagMgr />} a="Name" aw="w-[21px]" b="Manager" bw="w-[31px]" />
          <div>
            <Small s icon={<Tag lines />} t="Define Name" w="w-[46px]" chev="ml-[5px]" />
            <Small s icon={<TagFx />} t="Use in Formula" w="w-[52px]" chev="ml-[1px]" cls="text-[#b8b8b8]" />
            <Small s icon={<CreateSel />} t="Create from Selection" w="w-[75px]" />
          </div>
        </Group>
        <SepS />
        <Group s w="w-[202px]" label="Formula Auditing" lw="w-[55px]">
          <div className="ml-[4px] w-[80px]">
            <Small s icon={<TraceP />} t="Trace Precedents" w="w-[58px]" />
            <Small s icon={<TraceD />} t="Trace Dependents" w="w-[62px]" cls="bg-[#c8c6c4]" />
            <Small s icon={<Remove />} t="Remove Arrows" w="w-[54px]" chev="ml-[5px]" />
          </div>
          <div className="ml-[1px] w-[78px]">
            <Small s icon={<ShowFx />} t="Show Formulas" w="w-[53px]" />
            <Small s icon={<Warn />} t="Error Checking" w="w-[51px]" chev="ml-[5px]" />
            <Small s icon={<EvalFx />} t="Evaluate Formula" w="w-[60px]" />
          </div>
          <div className="h-[43px] w-px bg-[#dddbd9]" />
          <Big s w="w-[36px]" icon={<Watch />} a="Watch" aw="w-[22px]" b="Window" bw="w-[29px]" />
        </Group>
        <SepS />
        <Group s w="w-[124px]" label="Calculation" lw="w-[36px]">
          <Big s w="w-[51px] pl-px" icon={<Calc />} a="Calculation" aw="w-[39px]" b="Options" bw="w-[27px]" chev />
          <div className="pt-[4px]">
            <div className="flex h-[15px] items-center"><div className="flex h-[11px] w-[11px] justify-center"><Calc /></div><Fit c="w-[51px]">Calculate Now</Fit></div>
            <div className="mt-[5px] flex h-[15px] items-center"><div className="h-[11px] w-[11px]"><CalcSheet /></div><Fit c="w-[54px]">Calculate Sheet</Fit></div>
          </div>
        </Group>
        <SepS />
        <svg viewBox="0 0 12 7" className="ml-[117px] mt-[53px] h-[4px] w-[7px]" fill="none" stroke="#333" strokeWidth="2"><path d="M1 6.500L6 1L11 6.500" /></svg>
      </div>
      <div className="flex h-[28px] shrink-0 bg-[#e6e6e6] pt-[7px]">
        <div className="ml-[4px] flex h-[14px] w-[66px] items-center justify-between bg-white pl-[2px] pr-[4px]"><Fit c="w-[10px]">B3</Fit><Tri /></div>
        <Kebab c="ml-[8px] mt-[3px]" />
        <div className="ml-[10px] flex h-[14px] w-[71px] items-center bg-white text-[#aaa]">
          <svg viewBox="0 0 15 14" className="ml-[8px] h-[7px] w-[8px]" fill="none" stroke="#aaa" strokeWidth="2"><path d="M1 1L14 13M14 1L1 13" /></svg>
          <svg viewBox="0 0 17 14" className="ml-[15px] h-[7px] w-[9px]" fill="none" stroke="#aaa" strokeWidth="3"><path d="M1 7L6 12L16 1" /></svg>
          <Fx c="ml-[15px] text-[10px] text-[#555]" />
        </div>
        <div className="ml-[3px] flex h-[14px] w-[793px] items-center justify-between bg-white pl-[6px] pr-[3px]"><Fit c="w-[10px]">66</Fit><Chev c="h-[4px] w-[6px]" /></div>
      </div>
      <div className="flex h-[380px] shrink-0">
        <div className="relative h-[380px] w-[947px] overflow-hidden">
          <div className="grid h-[380px] grid-cols-[18.500px_117.500px_56.500px_19.500px_54px_54px_91.500px_40.500px_30px_46px_72.500px_40.500px_85px_32px_17.500px_27px_40.500px_58px_27.500px_18.500px] grid-rows-[12.500px_37.500px_13.500px_14px_13.500px_13.500px_13.500px_13.500px_13.500px_14px_13.500px_13.500px_12.500px_14px_13.500px_12.500px_13px_12.500px_13px_12.500px_12.500px_13px_12.500px_13px_13px_13.500px_13.500px] bg-white font-['Lato'] text-[8.500px] text-[#222]">
            <div className="flex items-end justify-end border-b border-r border-[#c8c8c8] bg-[#e6e6e6] p-px"><svg viewBox="0 0 16 16" className="h-[9px] w-[10px]" fill="#b0b0b0"><path d="M16 0V16H0Z" /></svg></div>
            {COLS_S.map((l) => (
              <div key={l} className={"flex items-center justify-center border-b border-r border-[#c8c8c8] pt-px leading-none " + (l === "B" ? "border-b-[#217346] bg-[#d2d2d2] text-[#217346]" : "bg-[#e6e6e6] text-[#444]")}>{l === "S" ? "" : l}</div>
            ))}
            <Rows s cols={COLS_S} data={INSET} />
          </div>
          <svg viewBox="961 633 947 380" className="absolute left-0 top-0 h-[380px] w-[947px]" fill="none">
            <rect x="1096.500" y="696.500" width="57" height="13.500" stroke="#217346" strokeWidth="1.100" />
            <rect x="1280.500" y="831" width="91.500" height="13.500" stroke="#e84040" strokeWidth="1.200" />
            <path d="M1861.700 646V682.700H1889V646" stroke="#444" strokeWidth="1" /><rect x="1735.700" y="723" width="27" height="14" stroke="#444" strokeWidth="1" />
            <rect x="1488.700" y="896.300" width="230" height="89.300" stroke="#555" strokeWidth="1" />
            <path d="M1601.500 1013V999.300H1686.500V1013" stroke="#e84040" strokeWidth="1.200" />
            <Arrows thin o={[1110.300, 702.700]} tips={[[1110.300, 756], [1239, 729.500], [1381, 729.700], [1185, 838]]} k={5.500} />
          </svg>
        </div>
        <div className="flex grow flex-col items-center bg-[#dcdcdc]">
          <div className="flex h-[11px] w-[11px] items-center justify-center bg-white"><svg viewBox="0 0 8 5" className="h-[3px] w-[5px]" fill="#555"><path d="M0 5H8L4 0Z" /></svg></div>
          <div className="mt-px h-[166px] w-[10px] bg-white" />
          <div className="mt-auto flex h-[11px] w-[11px] items-center justify-center bg-white"><svg viewBox="0 0 8 5" className="h-[3px] w-[5px]" fill="#555"><path d="M0 0H8L4 5Z" /></svg></div>
        </div>
      </div>
      <div className="flex h-[13px] shrink-0 items-center border-b border-[#d0d0d0] bg-[#e6e6e6] text-[8.200px] leading-[11px] text-[#222]">
        <svg viewBox="0 0 5 10" className="ml-[12px] h-[4px] w-[3px]" fill="#bbb"><path d="M5 0V10L0 5Z" /></svg>
        <svg viewBox="0 0 5 10" className="ml-[11px] h-[4px] w-[3px]" fill="#217346"><path d="M0 0V10L5 5Z" /></svg>
        <div className="ml-[19px] h-[12px] w-[65px] bg-[#ffff33] text-center"><Fit c="w-[54px]">Find Formulas</Fit></div>
        <div className="ml-[1px] h-[12px] w-[69px] border-b border-[#217346] bg-[#eaffff] text-center font-bold text-[#217346]"><Fit c="w-[60px]">Auditing Tools</Fit></div>
        <div className="ml-[1px] h-[12px] w-[70px] bg-[#66ff66] text-center"><Fit c="w-[60px]">Row References</Fit></div>
        <div className="ml-[2px] h-[12px] w-[85px] bg-[#ffff33] text-center"><Fit c="w-[74px]">Column References</Fit></div>
        <div className="ml-[1px] h-[12px] w-[119px] bg-[#00b0f0] text-center"><Fit c="w-[106px]">Convert Formulas To Values</Fit></div>
        <div className="ml-[2px] h-[12px] w-[65px] bg-[#66ff66] text-center"><Fit c="w-[56px]">Update Values</Fit></div>
        <div className="ml-[1px] h-[12px] w-[75px] bg-[#ffff33] text-center"><Fit c="w-[63px]">Debug Formulas</Fit></div>
        <div className="ml-[1px] h-[12px] w-[71px] bg-[#00b0f0] text-center"><Fit c="w-[67px]">Use Range Name</Fit></div>
        <span className="ml-[3px] text-[#666]">...</span>
        <svg viewBox="0 0 10 10" className="ml-[7px] h-[9px] w-[9px]" fill="none" stroke="#777"><circle cx="5" cy="5" r="4.300" /><path d="M5 2.500V7.500M2.500 5H7.500" /></svg>
        <Kebab c="ml-[9px]" />
        <div className="ml-[6px] flex h-[10px] w-[10px] items-center justify-center bg-white"><svg viewBox="0 0 5 10" className="h-[5px] w-[3px]" fill="#555"><path d="M5 0V10L0 5Z" /></svg></div>
        <div className="ml-[2px] h-[10px] w-[125px] bg-white" />
      </div>
      <div className="flex grow items-center border-b border-[#777] bg-[#f3f2f1] text-[7.600px]">
        <svg viewBox="0 0 10 9" className="ml-[727px] h-[8px] w-[8px] shrink-0" fill="#444"><path d="M0 0H10V4H6V7H0Z" /><circle cx="7.500" cy="6.500" r="2" /></svg>
        <Fit c="ml-[2px] w-[50px]">Display Settings</Fit>
        <div className="ml-[10px] flex h-[14px] w-[18px] items-center justify-center bg-[#d0cecc]"><svg viewBox="0 0 8 8" className="h-[8px] w-[8px]" fill="none" stroke="#777"><path d="M.5.5H7.500V7.500H.5ZM.5 3H7.500M.5 5H7.500M3 .5V7.500M5 .5V7.500" /></svg></div>
        <svg viewBox="0 0 8 8" className="ml-[6px] h-[7px] w-[7px]" fill="none" stroke="#aaa"><path d="M.5.5H7.500V7.500H.5ZM2.500 .5V7.500M5.500 .5V7.500" /></svg>
        <svg viewBox="0 0 8 8" className="ml-[11px] h-[7px] w-[8px]" fill="none" stroke="#aaa"><path d="M.5.5H7.500V7.500H.5ZM4 .5V4H.5" /></svg>
        <i className="ml-[8px] h-px w-[5px] bg-[#444]" />
        <div className="relative ml-[3px] flex h-[8px] w-[64px] items-center"><i className="h-px w-full bg-[#999]" /><i className="absolute left-[30px] h-[7px] w-[3px] bg-[#444]" /></div>
        <span className="ml-[1px] text-[10px] text-[#444]">+</span>
        <Fit c="ml-[4px] w-[17px]">100%</Fit>
      </div>
      <div className="absolute left-[829px] top-[507px] flex items-center text-[#b9b9b9]">
        <span className="font-['Open_Sans'] text-[13.500px] font-bold leading-[16px] text-[#e4e4e4] [-webkit-text-stroke:0.700px_#a5a5a5]"><Fit c="w-[47px]">Linked</Fit></span>
        <span className="flex h-[17px] w-[17px] items-center justify-center rounded-[3px] border border-[#a5a5a5] bg-[#eee] text-[13px] font-bold leading-none text-[#fff] [-webkit-text-stroke:0.700px_#a5a5a5]">in</span>
        <span className="ml-[3px] text-[9.500px] font-bold leading-[16px] text-[#ddd] [-webkit-text-stroke:0.600px_#a0a0a0]"><Fit c="w-[49px]">LEARNING</Fit></span>
      </div>
      <svg viewBox="0 0 8 12" className="absolute left-[554px] top-[67px] h-[10px] w-[7px]" fill="#fff" stroke="#aaa" strokeWidth=".6"><path d="M1 0L7 7H4.500L6 11L4.500 11.500L3 8L1 9.500Z" /></svg>
    </div>
  );
}

/* ---------- taskbar ---------- */
const Glyph = ({ children }: { children: React.ReactNode }) => <svg viewBox="0 0 20 20" className="h-[20px] w-[20px]" fill="none">{children}</svg>;
const APPS: { n: string; g: React.ReactNode; run?: boolean; on?: boolean }[] = [
  { n: "ie", g: <Glyph><path d="M16.500 12.500A6.700 6.700 0 1 1 17 9.500H6.500" stroke="#3fc3f5" strokeWidth="3.200" /><path d="M1.500 18.500C0 15 8 4 17 1.500C20 1 19 4 18 5.500" stroke="#f3c64b" strokeWidth="1.500" /></Glyph> },
  { n: "edge", g: <Glyph><circle cx="10" cy="10" r="9.500" fill="#1283d4" /><path d="M1 8A9.500 9.500 0 0 1 19.500 10C19.500 14 13 14 12.500 12C14 9 11 6.500 8 6.500C5 6.500 2 8 1 8Z" fill="#3fd0a3" /><path d="M8 7C3 9 4 18 11 19.400A9.500 9.500 0 0 1 1 8Z" fill="#0c59a4" /><path d="M8.500 11C8 15 13 17 17.500 15" stroke="#101010" strokeWidth="1.600" /></Glyph> },
  { n: "chrome", g: <Glyph><circle cx="10" cy="10" r="9.500" fill="#fbc116" /><path d="M10 10L1.800 5.200A9.500 9.500 0 0 1 18.500 5.700H10Z" fill="#e33b2e" /><path d="M10 10L1.800 5.200A9.500 9.500 0 0 0 9.500 19.500L13.500 12.500Z" fill="#2ba24c" /><circle cx="10" cy="10" r="4.600" fill="#fff" /><circle cx="10" cy="10" r="3.600" fill="#4285f4" /></Glyph> },
  { n: "firefox", run: true, g: <Glyph><circle cx="10" cy="11" r="8.500" fill="#ff7a1a" /><path d="M1.500 11C1 7 4 4 5 3C6 5 8 5 9 6C13 5 12 1 13 0C14 3 19 5 18.500 12C17 18 10 20 6 17Z" fill="#ffb021" /><path d="M2 9C1 15 6 20 11 19.500C16 19 19 14 18.300 10C16 17 8 18 5 12Z" fill="#ff4b3e" /><circle cx="10" cy="11.500" r="4.200" fill="#7b45d9" /></Glyph> },
  { n: "opera", run: true, g: <Glyph><ellipse cx="10" cy="10" rx="9" ry="9.700" fill="#e0142a" /><ellipse cx="10" cy="10" rx="3.800" ry="6.700" fill="#101010" /></Glyph> },
  { n: "safari", g: <Glyph><circle cx="10" cy="10" r="8" fill="#4b8fd8" stroke="#b4babf" strokeWidth="1.800" /><circle cx="10" cy="10" r="5.500" stroke="#9cc5ee" strokeDasharray="1 1.500" /><path d="M15 4.500L11 11L9 9Z" fill="#e5433c" /><path d="M5 15.500L11 11L9 9Z" fill="#fff" /></Glyph> },
  { n: "explorer", run: true, g: <Glyph><path d="M1 2H8L10 4.500H19V17H1Z" fill="#e9a82b" /><path d="M1 6H19V17H1Z" fill="#ffd86b" /><path d="M4 18V11H16V18H13V14H7V18Z" fill="#3ea0e8" /></Glyph> },
  { n: "helm", g: <Glyph><path d="M.5 1L3 4V16L.5 18.500ZM19.500 1L17 4V16L19.500 18.500ZM4.500 3L10 7L15.500 3V12L12.500 18L11 14H9L7.500 18L4.500 12Z" fill="#50575c" /><path d="M6 8.500L9 11M14 8.500L11 11" stroke="#101010" strokeWidth="1.300" /></Glyph> },
  { n: "k", run: true, g: <Glyph><rect width="20" height="20" fill="#000" /><path d="M4 2H9V18H4L6 16V4ZM9 10L14 2H17L12 9C17 10 17 15 14 19L11 16C14 15 13 11 9 11Z" fill="#fff" /></Glyph> },
  { n: "teams", run: true, g: <Glyph><circle cx="12" cy="3.500" r="3" fill="#7b83eb" /><circle cx="17" cy="5" r="2" fill="#5059c9" /><path d="M7 7H19V13Q19 16 16 15.500Q14 19 11 19Q7 18 7 14Z" fill="#5f68d3" /><rect y="5" width="11" height="11" rx="1" fill="#4b53bc" /><path d="M2.500 8H8.500M5.500 8V14" stroke="#fff" strokeWidth="1.700" /></Glyph> },
  { n: "git", run: true, g: <Glyph><path d="M10 0L15 5L10 10L5 5Z" fill="#f05133" /><path d="M5 5L10 10L5 15L0 10Z" fill="#5aa6e0" /><path d="M15 5L20 10L15 15L10 10Z" fill="#7ac143" /><path d="M10 10L15 15L10 20L5 15Z" fill="#f7c948" /><path d="M6 5L14 13M10 6V15" stroke="#222" strokeWidth="1.800" /></Glyph> },
  { n: "note", run: true, g: <Glyph><path d="M6 2L18 3L13 19L1 16Z" fill="#8fd0de" /><path d="M6 2L18 3L17 5L5 4Z" fill="#dfe8ea" /><path d="M13 19L18 3L19 14Z" fill="#c7d1d4" /></Glyph> },
  { n: "excel", run: true, on: true, g: <Glyph><path d="M5 1H20V19H5Z" fill="#21a366" /><path d="M12 1H20V7H12Z" fill="#33c481" /><path d="M5 13H20V19H5Z" fill="#185c37" /><path d="M12 7H20V13H12Z" fill="#1e8f56" /><rect y="5" width="11" height="11" fill="#107c41" /><path d="M3 7.500L8 13.500M8 7.500L3 13.500" stroke="#fff" strokeWidth="1.700" /></Glyph> },
  { n: "paint", run: true, g: <Glyph><path d="M10 4C3 4 1 9 1 13C1 18 5 20 8 18C9 15 11 15 13 16C17 15 17 4 10 4Z" fill="#c5dbe9" /><circle cx="5" cy="10" r="1.600" fill="#3f8fdc" /><circle cx="9" cy="7.500" r="1.500" fill="#e5533c" /><circle cx="5" cy="14.500" r="1.500" fill="#4bb155" /><path d="M19 0L12 12L10 18" stroke="#b8743a" strokeWidth="2.400" /></Glyph> },
];

function Taskbar() {
  return (
    <div className="flex h-[38px] shrink-0 items-center bg-[#101010] text-white">
      <svg viewBox="0 0 20 20" className="ml-[12px] h-[20px] w-[20px]" fill="#fff"><path d="M0 2.800L8.500 1.600V9.500H0ZM9.500 1.500L20 0V9.500H9.500ZM0 10.500H8.500V18.400L0 17.200ZM9.500 10.500H20V20L9.500 18.500Z" /></svg>
      <Search c="ml-[25px] h-[20px] w-[20px]" />
      <svg viewBox="0 0 20 20" className="ml-[25px] h-[20px] w-[20px]" fill="none" stroke="#fff" strokeWidth="1.400"><path d="M1 0V3.500H13V0M1 20V16.500H13V20M1 6H13V14H1ZM18 0V5M18 10.500V20" /><path d="M16.500 6.500H19.500V9H16.500Z" fill="#fff" stroke="none" /></svg>
      <div className="ml-[16px] flex">
        {APPS.map((a) => (
          <div key={a.n} className={"flex h-[38px] w-[46px] flex-col items-center justify-between " + (a.on ? "bg-[#333]" : "")}>
            <div className="mt-[9px]">{a.g}</div>
            <div className={"h-[3px] " + (a.on ? "w-[46px] " : "w-[35px] ") + (a.run ? "bg-[#8fa3b0]" : "")} />
          </div>
        ))}
      </div>
      <svg viewBox="0 0 17 10" className="ml-[822px] h-[10px] w-[17px]" fill="none" stroke="#fff" strokeWidth="1.500"><path d="M1 9L8.500 1L16 9" /></svg>
      <svg viewBox="0 0 20 12" className="ml-[12px] h-[12px] w-[20px]" fill="none" stroke="#fff" strokeWidth="1.300"><path d="M1 1H17V11H1ZM17 4H19V8H17" /><path d="M3 3H7V9H3Z" fill="#fff" stroke="none" /></svg>
      <svg viewBox="0 0 20 16" className="ml-[9px] h-[16px] w-[20px]" fill="none" stroke="#fff" strokeWidth="1.300"><path d="M6 1.500H19.500V12H3V8M11 12V15M7 15.200H15M1 1H5V5H1ZM3 5V8" /></svg>
      <svg viewBox="0 0 20 16" className="ml-[10px] h-[16px] w-[20px]" fill="none" stroke="#fff" strokeWidth="1.300"><path d="M1 5H4L8.500 1V15L4 11H1ZM11 5Q13 8 11 11" /><path d="M14 3Q17 8 14 13M17 1Q21 8 17 15" stroke="#888" /></svg>
      <svg viewBox="0 0 30 17" className="ml-[10px] h-[17px] w-[30px]" fill="none" stroke="#fff" strokeWidth="1.400"><path d="M1 1H29V16H1Z" /><path d="M4 5H26M4 8.500H26" strokeDasharray="2 1.700" /><path d="M4 12.500H7M9 12.500H21M23 12.500H26" /></svg>
      <Fit c="ml-[16px] w-[23px] text-[14.600px]">ESP</Fit>
      <Fit c="ml-[19px] w-[35px] text-[14.600px]">06:57</Fit>
      <svg viewBox="0 0 20 20" className="ml-[23px] mt-[2px] h-[20px] w-[20px]" fill="none" stroke="#fff" strokeWidth="1.400"><path d="M1 1H19V16H13L10 19L7 16H1Z" /></svg>
      <div className="ml-[25px] h-[38px] w-px bg-[#555]" />
    </div>
  );
}

export default function App() {
  return (
    <div className="relative flex h-[1080px] w-[1920px] flex-col overflow-hidden bg-[#262626] font-['Open_Sans',sans-serif]">
      <TitleBar />
      <Ribbon />
      <FormulaBar />
      <MainSheet />
      <SheetTabs />
      <div className="h-[27px] shrink-0 border-t border-[#3a3a3a] bg-[#323130]" />
      <Taskbar />
      <div className="absolute left-[1128px] top-[202px] flex h-[128px] w-[339px] flex-col border border-[#bababa] bg-[#ebebeb] pl-[13px] pt-[8px] text-[14.300px] leading-[20px] text-[#333] shadow-[0_2px_4px_rgba(0,0,0,0.25)]">
        <Fit c="mb-[7px] w-[157px] font-bold text-[#262626]">Rastrear dependientes</Fit>
        <Fit c="w-[253px]">Muestra flechas que indican las celdas</Fit>
        <Fit c="w-[221px]">afectadas por el valor de la celda</Fit>
        <Fit c="w-[290px]">seleccionada. Use Alt+% para ir a las celdas</Fit>
        <Fit c="w-[260px]">dependientes de la celda seleccionada.</Fit>
      </div>
      <Inset />
    </div>
  );
}
